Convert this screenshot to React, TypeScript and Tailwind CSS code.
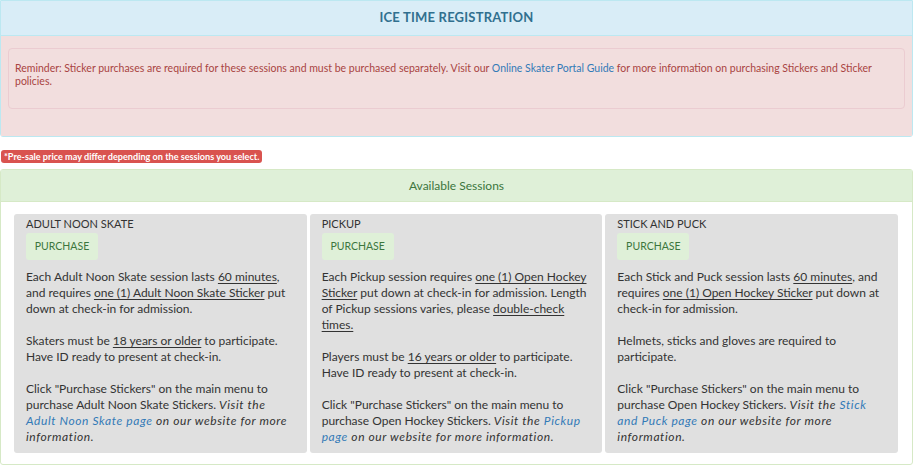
import React from 'react';

type Session = {
    title: string;
    body: React.ReactNode;
};

const U = ({ children }: { children: React.ReactNode }) => (
    <span className="underline underline-offset-2">{children}</span>
);

const sessions: Session[] = [
    {
        title: 'ADULT NOON SKATE',
        body: (
            <>
                <p>
                    Each Adult Noon Skate session lasts <U>60 minutes</U>, and requires <U>one (1) Adult Noon Skate Sticker</U> put down at check-in for admission.
                </p>
                <p>
                    Skaters must be <U>18 years or older</U> to participate. Have ID ready to present at check-in.
                </p>
                <p>
                    Click "Purchase Stickers" on the main menu to purchase Adult Noon Skate Stickers.{' '}
                    <em className="tracking-[0.6px]">
                        Visit the <a href="#" className="text-[#337ab7]">Adult Noon Skate page</a> on our website for more information.
                    </em>
                </p>
            </>
        ),
    },
    {
        title: 'PICKUP',
        body: (
            <>
                <p>
                    Each Pickup session requires <U>one (1) Open Hockey Sticker</U> put down at check-in for admission. Length of Pickup sessions varies, please <U>double-check times.</U>
                </p>
                <p>
                    Players must be <U>16 years or older</U> to participate. Have ID ready to present at check-in.
                </p>
                <p>
                    Click "Purchase Stickers" on the main menu to purchase Open Hockey Stickers.{' '}
                    <em className="tracking-[0.6px]">
                        Visit the <a href="#" className="text-[#337ab7]">Pickup page</a> on our website for more information.
                    </em>
                </p>
            </>
        ),
    },
    {
        title: 'STICK AND PUCK',
        body: (
            <>
                <p>
                    Each Stick and Puck session lasts <U>60 minutes</U>, and requires <U>one (1) Open Hockey Sticker</U> put down at check-in for admission.
                </p>
                <p>Helmets, sticks and gloves are required to participate.</p>
                <p>
                    Click "Purchase Stickers" on the main menu to purchase Open Hockey Stickers.{' '}
                    <em className="tracking-[0.6px]">
                        Visit the <a href="#" className="text-[#337ab7]">Stick and Puck page</a> on our website for more information.
                    </em>
                </p>
            </>
        ),
    },
];

export default function App() {
    return (
        <div className="min-h-screen w-[915px] bg-white font-['Lato',sans-serif] text-[#333]">
            {/* Registration panel */}
            <div className="mr-[2px] border border-[#bce8f1] rounded-b-[3px]">
                <div className="h-[35px] bg-[#d9edf7] border-b border-[#bce8f1] flex items-center justify-center">
                    <h1 className="text-[13px] font-bold text-[#31708f] tracking-[0.2px]">ICE TIME REGISTRATION</h1>
                </div>
                <div className="bg-[#f2dede] px-[7px] pt-[12px] pb-[27px]">
                    <div className="border border-[#ebccd1] rounded-[4px] px-[6px] pt-[13px] pb-[20px] text-[10.5px] leading-[13px] text-[#a94442]">
                        Reminder: Sticker purchases are required for these sessions and must be purchased separately. Visit our{' '}
                        <a href="#" className="text-[#337ab7]">Online Skater Portal Guide</a> for more information on purchasing Stickers and Sticker policies.
                    </div>
                </div>
            </div>

            {/* Pre-sale label */}
            <div className="mt-[13px] ml-[1px] flex">
                <span className="bg-[#d9534f] text-white text-[9.1px] font-bold leading-[13px] px-[3px] rounded-[3px]">
                    *Pre-sale price may differ depending on the sessions you select.
                </span>
            </div>

            {/* Available Sessions panel */}
            <div className="mt-[6px] mr-[2px] border border-[#d6e9c6] rounded-[3px]">
                <div className="h-[32px] bg-[#dff0d8] border-b border-[#d6e9c6] flex items-center justify-center text-[12px] text-[#3c763d]">
                    Available Sessions
                </div>
                <div className="grid grid-cols-3 gap-[3px] pl-[13px] pr-[14px] pt-[12px] pb-[11px]">
                    {sessions.map((s) => (
                        <div key={s.title} className="bg-[#e0e0e0] rounded-[3px] px-[12px] pt-[2px] pb-[8px]">
                            <h2 className="text-[11px] leading-[16px]">{s.title}</h2>
                            <button className="bg-[#dff0d8] text-[#3c763d] text-[10.5px] w-[72px] h-[27px] rounded-[3px]">
                                PURCHASE
                            </button>
                            <div className="mt-[9px] text-[12px] leading-[16px] space-y-[16px]">{s.body}</div>
                        </div>
                    ))}
                </div>
            </div>
        </div>
    );
}
